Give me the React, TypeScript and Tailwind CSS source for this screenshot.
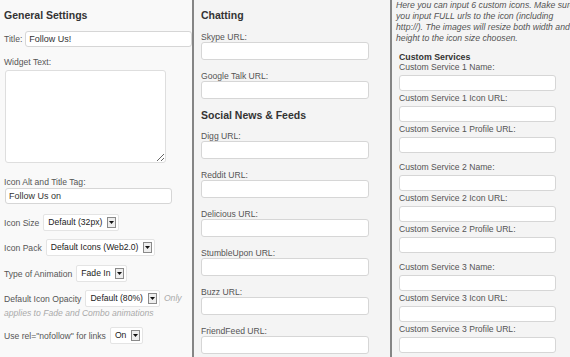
import React from "react";

function Label({ children, className = "" }: { children: React.ReactNode; className?: string }) {
  return <div className={`whitespace-nowrap text-[8.6px] leading-[10px] text-[#555] ${className}`}>{children}</div>;
}

function Field({ className = "", h = "h-[18px]", value = "" }: { className?: string; h?: string; value?: string }) {
  return (
    <input
      readOnly
      defaultValue={value}
      className={`block ${h} rounded-[3px] border border-[#d6d6d6] bg-white px-[3px] text-[9px] text-[#333] outline-none ${className}`}
    />
  );
}

function Select({ value }: { value: string }) {
  return (
    <div className="flex h-[17px] items-center rounded-[2px] border border-[#e4e4e4] bg-white pl-[4px] pr-[2px] text-[8.6px] text-[#222]">
      <span className="whitespace-nowrap">{value}</span>
      <span className="ml-[5px] flex h-[11px] w-[9px] items-center justify-center border border-[#8a8a8a] bg-[#eeeeee]">
        <svg width="5" height="3" viewBox="0 0 5 3">
          <path d="M0 0h5L2.5 3z" fill="#111" />
        </svg>
      </span>
    </div>
  );
}

function Heading({ children, className = "" }: { children: React.ReactNode; className?: string }) {
  return <div className={`whitespace-nowrap text-[10.5px] font-bold leading-[14px] text-[#333] ${className}`}>{children}</div>;
}

export default function App() {
  const col2: { heading?: string; label?: string }[] = [
    { label: "Skype URL:" },
    { label: "Google Talk URL:" },
  ];
  const news = ["Digg URL:", "Reddit URL:", "Delicious URL:", "StumbleUpon URL:", "Buzz URL:", "FriendFeed URL:"];
  return (
    <div className="flex h-[357px] w-[570px] overflow-hidden font-['Liberation_Sans',Arial,sans-serif]">
      {/* Column 1 */}
      <div className="flex w-[192px] shrink-0 flex-col bg-[#f9f9f9] pl-[4px] pt-[8px]">
        <Heading>General Settings</Heading>
        <div className="mt-[9px] flex items-center gap-[3px]">
          <Label>Title:</Label>
          <Field h="h-[16px]" value="Follow Us!" className="w-[168px] border-[#bdbdbd] text-[#222]" />
        </div>
        <Label className="mt-[9px] leading-[12px]">Widget Text:</Label>
        <textarea
          readOnly
          className="ml-[1px] mt-[2px] block h-[93px] w-[161px] rounded-[3px] border border-[#dedede] bg-white outline-none"
        />
        <Label className="mt-[13px] leading-[12px]">Icon Alt and Title Tag:</Label>
        <Field h="h-[16px]" value="Follow Us on" className="ml-[1px] w-[167px] text-[#222]" />
        <div className="mt-[10px] flex items-center gap-[4px]">
          <Label>Icon Size</Label>
          <Select value="Default (32px)" />
        </div>
        <div className="mt-[8px] flex items-center gap-[4px]">
          <Label>Icon Pack</Label>
          <Select value="Default Icons (Web2.0)" />
        </div>
        <div className="mt-[9px] flex items-center gap-[4px]">
          <Label>Type of Animation</Label>
          <Select value="Fade In" />
        </div>
        <div className="mt-[8px] flex items-center gap-[4px]">
          <Label>Default Icon Opacity</Label>
          <Select value="Default (80%)" />
          <span className="text-[8.6px] italic text-[#aaa]">Only</span>
        </div>
        <div className="whitespace-nowrap text-[8.6px] italic leading-[12px] text-[#aaa]">
          applies to Fade and Combo animations
        </div>
        <div className="mt-[8px] flex items-center gap-[4px]">
          <Label>Use rel="nofollow" for links</Label>
          <Select value="On" />
        </div>
      </div>
      <div className="w-[2px] shrink-0 bg-[#858585]" />

      {/* Column 2 */}
      <div className="flex w-[196px] shrink-0 flex-col bg-[#f4f4f4] pl-[7px] pt-[8px]">
        <Heading>Chatting</Heading>
        {col2.map((c, i) => (
          <div key={i} className={i === 0 ? "mt-[10px]" : "mt-[11px]"}>
            <Label>{c.label}</Label>
            <Field className="w-[168px]" />
          </div>
        ))}
        <Heading className="mt-[9px]">Social News &amp; Feeds</Heading>
        {news.map((l, i) => (
          <div key={l} className={i === 0 ? "mt-[9px]" : "mt-[11px]"}>
            <Label>{l}</Label>
            <Field className="w-[168px]" />
          </div>
        ))}
      </div>
      <div className="w-[2px] shrink-0 bg-[#858585]" />

      {/* Column 3 */}
      <div className="flex min-w-0 flex-1 flex-col overflow-hidden bg-[#f4f4f4] pl-[7px]">
        <div className="-ml-[3px] text-[8.7px] italic leading-[11px] text-[#555]">
          <div className="whitespace-nowrap">Here you can input 6 custom icons. Make sure</div>
          <div className="whitespace-nowrap">you input FULL urls to the icon (including</div>
          <div className="whitespace-nowrap">http://). The images will resize both width and</div>
          <div className="whitespace-nowrap">height to the icon size choosen.</div>
        </div>
        <div className="mt-[8px] whitespace-nowrap text-[8.8px] font-bold leading-[10px] text-[#333]">Custom Services</div>
        {[1, 2, 3].map((n) => (
          <div key={n} className={n === 1 ? "" : "mt-[9px]"}>
            <Label>Custom Service {n} Name:</Label>
            <Field h="h-[16px]" className="mt-[3px] w-[157px]" />
            <Label className="mt-[2px]">Custom Service {n} Icon URL:</Label>
            <Field h="h-[16px]" className="mt-[3px] w-[157px]" />
            <Label className="mt-[2px]">Custom Service {n} Profile URL:</Label>
            <Field h="h-[16px]" className="mt-[3px] w-[157px]" />
          </div>
        ))}
      </div>
    </div>
  );
}
